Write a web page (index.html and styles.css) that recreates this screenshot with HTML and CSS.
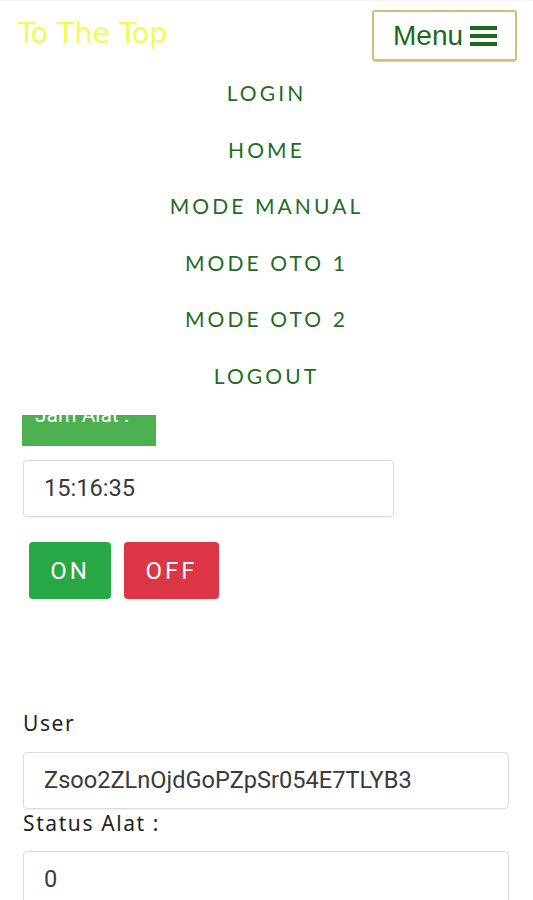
FILE: index.html
```html
<!DOCTYPE html>
<html lang="id">
<head>
<meta charset="utf-8">
<title>To The Top</title>
<link rel="stylesheet" href="styles.css">
</head>
<body>
<header class="topbar">
  <a class="brand" href="#">To The Top</a>
  <button class="menu-btn" type="button">Menu
    <svg class="burger" width="27" height="22" viewBox="0 0 27 22" aria-hidden="true">
      <rect x="0" y="1" width="27" height="4" fill="#1b6a1b"/>
      <rect x="0" y="9" width="27" height="4" fill="#1b6a1b"/>
      <rect x="0" y="17" width="27" height="4" fill="#1b6a1b"/>
    </svg>
  </button>
</header>
<nav class="dropdown">
  <a href="#">LOGIN</a>
  <a href="#">HOME</a>
  <a href="#">MODE MANUAL</a>
  <a href="#">MODE OTO 1</a>
  <a href="#">MODE OTO 2</a>
  <a href="#">LOGOUT</a>
</nav>
<main class="content">
  <div class="tag">Jam Alat :</div>
  <div class="field short">15:16:35</div>
  <div class="actions">
    <button class="btn on" type="button">ON</button>
    <button class="btn off" type="button">OFF</button>
  </div>
  <label class="label first">User</label>
  <div class="field">Zsoo2ZLnOjdGoPZpSr054E7TLYB3</div>
  <label class="label">Status Alat :</label>
  <div class="field">0</div>
</main>
</body>
</html>
```
FILE: styles.css
```css
html, body {
  margin: 0;
  padding: 0;
  background: #ffffff;
}
body {
  position: relative;
  width: 533px;
  height: 900px;
  overflow: hidden;
  font-family: "Liberation Sans", Arial, sans-serif;
}
.topbar {
  position: relative;
  z-index: 3;
  display: flex;
  justify-content: space-between;
  align-items: flex-start;
  padding: 10px 16px 0 18px;
  height: 56px;
  box-sizing: border-box;
  box-shadow: inset 0 2px 2px -1px rgba(0,0,0,0.05);
}
.brand {
  margin-top: 10px;
  font-family: "DejaVu Sans", sans-serif;
  font-size: 28.5px;
  line-height: 28px;
  color: #f2fb52;
  text-decoration: none;
}
.menu-btn {
  display: flex;
  align-items: center;
  gap: 7px;
  width: 145px;
  height: 51px;
  box-sizing: border-box;
  padding: 0 0 0 19px;
  border: 2px solid #d9bc72;
  border-radius: 3px;
  background: #ffffff;
  box-shadow: 0 2px 1px -1px rgba(180,150,80,0.5);
  font-family: "Liberation Sans", Arial, sans-serif;
  font-size: 28px;
  color: #1b6a1b;
}
.burger { display: block; margin-top: 1px; }
.dropdown {
  position: absolute;
  z-index: 2;
  top: 65px;
  left: 0;
  right: 0;
  display: flex;
  flex-direction: column;
  align-items: center;
  padding-bottom: 11px;
  background: #ffffff;
}
.dropdown a {
  display: block;
  height: 56.5px;
  line-height: 56.5px;
  font-family: Lato, "Open Sans", sans-serif;
  font-size: 21px;
  letter-spacing: 3.1px;
  color: #1f6d1f;
  text-decoration: none;
}
.content {
  position: relative;
  z-index: 1;
  padding: 334px 0 0 23px;
}
.tag {
  width: 134px;
  box-sizing: border-box;
  margin-left: -1px;
  padding: 10px 13px 16px;
  line-height: 30px;
  font-family: Roboto, sans-serif;
  font-size: 21px;
  color: #ffffff;
  background: #4caf50;
}
.field {
  width: 486px;
  height: 57px;
  box-sizing: border-box;
  padding-left: 20px;
  border: 1px solid #dcdcdc;
  border-radius: 4px;
  box-shadow: 0 1px 2px rgba(0,0,0,0.06);
  font-family: Roboto, sans-serif;
  font-size: 23.6px;
  line-height: 55px;
  color: #3a3a3a;
}
.field.short {
  width: 371px;
  margin-top: 14px;
}
.actions {
  display: flex;
  gap: 13px;
  margin: 25px 0 0 6px;
}
.btn {
  height: 57px;
  padding: 0;
  border: none;
  border-radius: 4px;
  font-family: Roboto, sans-serif;
  font-size: 24px;
  letter-spacing: 3px;
  color: #ffffff;
}
.btn.on { width: 82px; background: #28a745; }
.btn.off { width: 95px; background: #dc3545; }
.label {
  display: block;
  font-family: "Noto Sans", "Open Sans", sans-serif;
  font-size: 21px;
  letter-spacing: 1.6px;
  line-height: 28px;
  color: #222222;
  margin-bottom: 15px;
}
.label.first { margin-top: 110px; }
.field + .label { margin-top: 0; margin-bottom: 14px; }
```
